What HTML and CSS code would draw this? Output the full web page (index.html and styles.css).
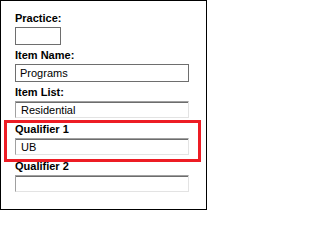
FILE: index.html
```html
<!DOCTYPE html>
<html>
<head>
<meta charset="utf-8">
<link rel="stylesheet" href="styles.css">
</head>
<body>
<div class="frame">
  <div class="field">
    <div class="lbl">Practice:</div>
    <div class="box plain short"></div>
  </div>
  <div class="field">
    <div class="lbl">Item Name:</div>
    <div class="box plain">Programs</div>
  </div>
  <div class="field">
    <div class="lbl">Item List:</div>
    <div class="box sunken">Residential</div>
  </div>
  <div class="hl">
    <div class="field">
      <div class="lbl">Qualifier 1</div>
      <div class="box sunken">UB</div>
    </div>
  </div>
  <div class="field after">
    <div class="lbl">Qualifier 2</div>
    <div class="box sunken"></div>
  </div>
</div>
</body>
</html>
```
FILE: styles.css
```css
html, body {
  margin: 0;
  padding: 0;
  background: #ffffff;
}
.frame {
  width: 207px;
  height: 210px;
  box-sizing: border-box;
  border: 1px solid #000000;
  padding: 10px 0 0 14px;
  font-family: "Liberation Sans", Arial, sans-serif;
  font-size: 11px;
  color: #000000;
  display: flex;
  flex-direction: column;
}
.field {
  display: flex;
  flex-direction: column;
  align-items: flex-start;
}
.field + .field {
  margin-top: 3px;
}
.lbl {
  height: 14px;
  line-height: 14px;
  margin-bottom: 2px;
  font-weight: bold;
  white-space: nowrap;
}
.box {
  width: 174px;
  height: 18px;
  box-sizing: border-box;
  line-height: 16px;
  padding-left: 4px;
  background: #ffffff;
  white-space: nowrap;
}
.plain {
  border: 1px solid #6e6e6e;
}
.short {
  width: 46px;
}
.sunken {
  height: 17px;
  line-height: 14px;
  padding-left: 5px;
  border-top: 1px solid #a0a0a0;
  border-left: 1px solid #a0a0a0;
  border-right: 1px solid #e3e3e3;
  border-bottom: 1px solid #e3e3e3;
  box-shadow: inset 0 1px 0 #6d6d6d;
  padding-top: 1px;
}
.hl {
  margin: 2px 0 0 -11px;
  width: 197px;
  box-sizing: border-box;
  border: 3px solid #ed1c24;
  padding: 0 9px 4px 8px;
}
.hl .lbl {
  margin-top: -1px;
}
.field.after {
  margin-top: -3px;
}
```
